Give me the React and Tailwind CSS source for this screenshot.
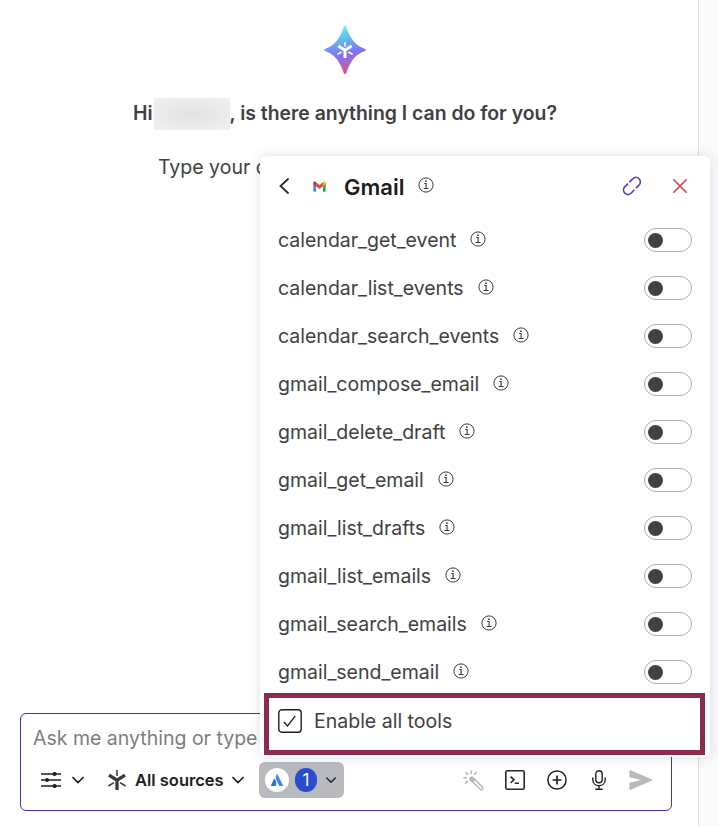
const tools = [
  'calendar_get_event',
  'calendar_list_events',
  'calendar_search_events',
  'gmail_compose_email',
  'gmail_delete_draft',
  'gmail_get_email',
  'gmail_list_drafts',
  'gmail_list_emails',
  'gmail_search_emails',
  'gmail_send_email',
]

function SparkLogo() {
  return (
    <svg width="42" height="48" viewBox="0 0 42 48" fill="none">
      <defs>
        <linearGradient id="spark" x1="15" y1="0" x2="25" y2="48" gradientUnits="userSpaceOnUse">
          <stop offset="0" stopColor="#6cf5ee" />
          <stop offset="0.3" stopColor="#65b5ee" />
          <stop offset="0.58" stopColor="#8370f4" />
          <stop offset="0.78" stopColor="#a568c8" />
          <stop offset="1" stopColor="#f0525a" />
        </linearGradient>
      </defs>
      <path
        d="M21 0C21.8 0 22.2.7 22.5 1.6C25.5 10.5 29.5 16.5 34.5 19.8C37 21.4 39 22 41 22.9C42.2 23.4 42.2 24.6 41 25.1C39 26 37 26.6 34.5 28.2C29.5 31.5 25.5 37.5 22.5 46.4C22.2 47.3 21.8 48 21 48C20.2 48 19.8 47.3 19.5 46.4C16.5 37.5 12.5 31.5 7.5 28.2C5 26.6 3 26 1 25.1C-.2 24.6-.2 23.4 1 22.9C3 22 5 21.4 7.5 19.8C12.5 16.5 16.5 10.5 19.5 1.6C19.8.7 20.2 0 21 0Z"
        fill="url(#spark)"
      />
      <path d="M14.3 20L21 24.2L27.7 20M21 24V32" stroke="#fff" strokeWidth="3" />
      <path d="M21 16V20.5M13.3 28.4L17.6 26M28.7 28.4L24.4 26" stroke="#fff" strokeWidth="1.6" />
    </svg>
  )
}

function GmailIcon() {
  return (
    <svg width="13" height="11" viewBox="0 0 13 11">
      <path d="M.3 1.8V9.9Q.3 10.7 1.1 10.7H3.1V3.5Z" fill="#4a83f0" />
      <path d="M12.7 1.8V9.9Q12.7 10.7 11.9 10.7H9.9V3.5Z" fill="#34a351" />
      <path d="M9.9 1.3L11 .6Q12.7.2 12.7 2V2.9L9.9 5.3Z" fill="#f5b823" />
      <path d="M3.1 1.3L2 .6Q.3.2.3 2V2.9L3.1 5.3Z" fill="#b93a32" />
      <path d="M3.1 1.3L6.5 3.9L9.9 1.3V5.3L6.5 7.9L3.1 5.3Z" fill="#e34a3b" />
    </svg>
  )
}

function InfoIcon() {
  return (
    <svg className="shrink-0" width="16" height="16" viewBox="0 0 16 16" fill="none" stroke="#3c3c40">
      <circle cx="8" cy="8" r="7.1" strokeWidth="1" />
      <path d="M6.2 6.5H8.1V11.2M5.6 11.5H10.6" strokeWidth="1.1" />
      <circle cx="7.9" cy="4.2" r=".9" fill="#3c3c40" stroke="none" />
    </svg>
  )
}

function Chevron({ size = 12 }) {
  return (
    <svg width={size} height={size} viewBox="0 0 12 12" fill="none" stroke="#1f2023" strokeWidth="1.7" strokeLinecap="round" strokeLinejoin="round">
      <path d="M.9 3.5L6 8.6L11.1 3.5" />
    </svg>
  )
}

function SlidersIcon() {
  return (
    <svg width="20" height="16" viewBox="0 0 20 16" fill="#1f2023" stroke="#1f2023">
      <path d="M0 2H20M0 8H20M0 14H20" strokeWidth="1.7" />
      <circle cx="13.6" cy="2" r="2.1" stroke="none" />
      <circle cx="6" cy="8" r="2.1" stroke="none" />
      <circle cx="13.6" cy="14" r="2.1" stroke="none" />
    </svg>
  )
}

function SourcesIcon() {
  return (
    <svg width="18" height="20" viewBox="0 0 18 20" fill="none" stroke="#3a3b3f">
      <path d="M1 5.2L9 10.2L17 5.2M9 10V20" strokeWidth="3.3" />
      <path d="M9 0V6M.4 16L6 12.6M17.6 16L12 12.6" strokeWidth="1.6" />
    </svg>
  )
}

function WandIcon() {
  return (
    <svg width="21" height="21" viewBox="0 0 21 21" fill="none" stroke="#b4b5b9" strokeLinecap="round">
      <path d="M7 8.4L8.4 7Q9 6.6 9.7 7.2L19.8 17.5Q20.3 18.2 19.7 18.9L19 19.6Q18.3 20.1 17.6 19.5L7.1 9.7Q6.6 9 7 8.4Z" strokeWidth="1.3" />
      <path d="M7 8.4L8.4 7L11.6 10.2L10.2 11.6Z" fill="#b4b5b9" strokeWidth="1" />
      <path d="M8.2.9V3.6M3 2.5L4.7 4.4M13.3 2.5L11.7 4.4M.8 7.7H3.4M2.7 13.1L4.4 11.3" strokeWidth="1.5" />
    </svg>
  )
}

function TerminalIcon() {
  return (
    <svg width="20" height="20" viewBox="0 0 20 20" fill="none" stroke="#29292c" strokeWidth="1.6">
      <rect x=".8" y=".8" width="18.4" height="18.4" rx="1.5" />
      <path d="M5.6 6.6L9 9.8L5.6 13M9.7 13.2H14" />
    </svg>
  )
}

function PlusIcon() {
  return (
    <svg width="20" height="20" viewBox="0 0 20 20" fill="none" stroke="#1f2023" strokeWidth="1.5">
      <circle cx="10" cy="10" r="9.1" />
      <path d="M10 5.6V14.4M5.6 10H14.4" strokeWidth="1.7" />
    </svg>
  )
}

function MicIcon() {
  return (
    <svg width="14" height="20" viewBox="0 0 14 20" fill="none" stroke="#1f2023" strokeWidth="1.4">
      <rect x="3.8" y=".8" width="6.4" height="12" rx="3.2" />
      <path d="M.8 7.5V9.8C.8 13.4 3.5 15.7 7 15.7S13.2 13.4 13.2 9.8V7.5M7 15.7V19M3.3 19.2H10.7" />
    </svg>
  )
}

function SendIcon() {
  return (
    <svg width="24" height="20" viewBox="0 0 24 20" fill="#b9babe">
      <path d="M.4 1.2Q.4-.2 1.8.3L22.6 9.2Q24 10 22.6 10.8L1.8 19.7Q.4 20.2.4 18.8V12.7L12 10L.4 7.3Z" />
    </svg>
  )
}

function LinkIcon() {
  return (
    <svg width="20" height="20" viewBox="0 0 20 20" fill="none" stroke="#5b3cc4" strokeWidth="1.6">
      <path d="M7.4 6.1L10.4 3.1C12.5 1 15.2 .9 17 2.7C18.9 4.6 18.8 7.4 16.8 9.4L13.9 12.1" />
      <path d="M12.4 13.7L9.5 16.7C7.4 18.8 4.7 18.9 2.9 17.1C1 15.2 1.1 12.4 3.1 10.4L6 7.6" />
    </svg>
  )
}

function ToolRow({ name }) {
  return (
    <div className="flex h-12 items-center">
      <span className="pt-0.5 text-[19.5px] text-[#3f4044]">{name}</span>
      <span className="ml-3.5 -mt-0.5">
        <InfoIcon />
      </span>
      <button className="ml-auto flex h-6 w-12 items-center rounded-full border border-[#aeaeb2] pl-[3px]">
        <span className="size-[15px] rounded-full bg-[#414246]" />
      </button>
    </div>
  )
}

function GmailPanel() {
  return (
    <section className="absolute left-[260px] top-[156px] h-[601px] w-[450px] rounded-md bg-white shadow-[0_0_14px_rgba(60,50,130,0.16)]">
      <header className="flex h-[60px] items-center pl-[19px] pr-[23px]">
        <svg width="11" height="16" viewBox="0 0 11 16" fill="none" stroke="#2c2c30" strokeWidth="1.8" strokeLinecap="round">
          <path d="M9 1L1.5 8L9 15" />
        </svg>
        <span className="ml-[23px]">
          <GmailIcon />
        </span>
        <h2 className="ml-[18px] pt-0.5 text-[22px] font-semibold text-[#1c1c1f]">Gmail</h2>
        <span className="ml-[13.5px] -mt-0.5">
          <InfoIcon />
        </span>
        <div className="ml-auto flex items-center gap-[31px]">
          <LinkIcon />
          <svg width="14" height="14" viewBox="0 0 14 14" stroke="#d43a3e" strokeWidth="1.5" strokeLinecap="round">
            <path d="M.8.8L13.2 13.2M13.2.8L.8 13.2" />
          </svg>
        </div>
      </header>
      <div className="pl-[18px] pr-[18px]">
        {tools.map((name) => (
          <ToolRow key={name} name={name} />
        ))}
      </div>
      <div className="-mt-[3px] ml-1 flex h-[62px] w-[441px] items-center border-5 border-[#8b2c4d] pb-[7px] pl-[9px]">
        <svg width="24" height="24" viewBox="0 0 24 24" fill="none" stroke="#1f2023" strokeWidth="1.4">
          <rect x=".8" y=".8" width="22.4" height="22.4" rx="3" />
          <path d="M5.9 13.1L9.6 17L17.3 6.8" />
        </svg>
        <span className="ml-3 pt-0.5 text-[19.5px] text-[#3f4044]">Enable all tools</span>
      </div>
    </section>
  )
}

function Composer() {
  return (
    <div className="ml-5 h-[98px] w-[652px] rounded-md border border-[#4035b8] bg-white">
      <p className="pl-3 pt-[9px] text-[19.5px] leading-[30px] text-[#7c7d81]">Ask me anything or type</p>
      <div className="mt-[9px] flex h-9 items-center">
        <div className="flex items-center gap-[11px] pl-5">
          <SlidersIcon />
          <Chevron />
        </div>
        <div className="ml-[24px] flex items-center">
          <SourcesIcon />
          <span className="ml-[9px] w-[89px] whitespace-nowrap text-[16.5px] font-semibold text-[#1f2023]">All sources</span>
          <span className="ml-2">
            <Chevron />
          </span>
        </div>
        <button className="ml-[15px] flex h-9 w-[85px] items-center rounded-md bg-[#b9babe] pl-[6px]">
          <span className="flex size-6 items-center justify-center rounded-full bg-white">
            <svg width="12" height="12" viewBox="0 0 12 12">
              <path d="M5.8.2Q3.6 4.2 6.1 7.4L8 11.4Q8.3 12 8.9 12H11.5Q12.2 12 11.9 11.3L6.6.4Q6.2-.3 5.8.2Z" fill="#3d86f7" />
              <path d="M3.5 4.7Q3.1 4.3 2.8 4.9L.1 11.2Q-.2 12 .6 12H4.1Q4.7 12 4.9 11.4Q6.1 7.8 3.5 4.7Z" fill="#2b6fe6" />
            </svg>
          </span>
          <span className="ml-[6px] flex h-6 w-[22px] items-center justify-center rounded-full bg-[#2a4dd0] pt-px text-[17px] text-white">1</span>
          <span className="ml-[9px]">
            <Chevron size={10} />
          </span>
        </button>
        <div className="ml-auto flex items-center pr-[18px]">
          <WandIcon />
          <span className="ml-[21px]"><TerminalIcon /></span>
          <span className="ml-[22px]"><PlusIcon /></span>
          <span className="ml-[25px]"><MicIcon /></span>
          <span className="ml-[23px]"><SendIcon /></span>
        </div>
      </div>
    </div>
  )
}

export default function App() {
  return (
    <div className="relative flex h-[826px] w-[718px] overflow-hidden bg-white font-['Inter',sans-serif]">
      <main className="flex w-[698px] flex-col pb-[15px]">
        <div className="flex w-[690px] flex-col items-center pt-[26px]">
          <SparkLogo />
          <h1 className="mt-6 flex h-8 items-center whitespace-nowrap text-[19.4px] font-semibold text-[#3f4044]">
            <span>Hi</span>
            <span className="ml-px h-8 w-[76px] bg-[radial-gradient(ellipse_at_center,#e2e2e2,#f1f1f1)]" />
            <span>, is there anything I can do for you?</span>
          </h1>
        </div>
        <p className="mt-[22px] pl-[158px] text-[19.5px] leading-[30px] text-[#3f4044]">Type your question</p>
        <div className="mt-auto">
          <Composer />
        </div>
      </main>
      <aside className="w-5 border-l border-[#dcdce0] bg-[#fafafb]" />
      <GmailPanel />
    </div>
  )
}
